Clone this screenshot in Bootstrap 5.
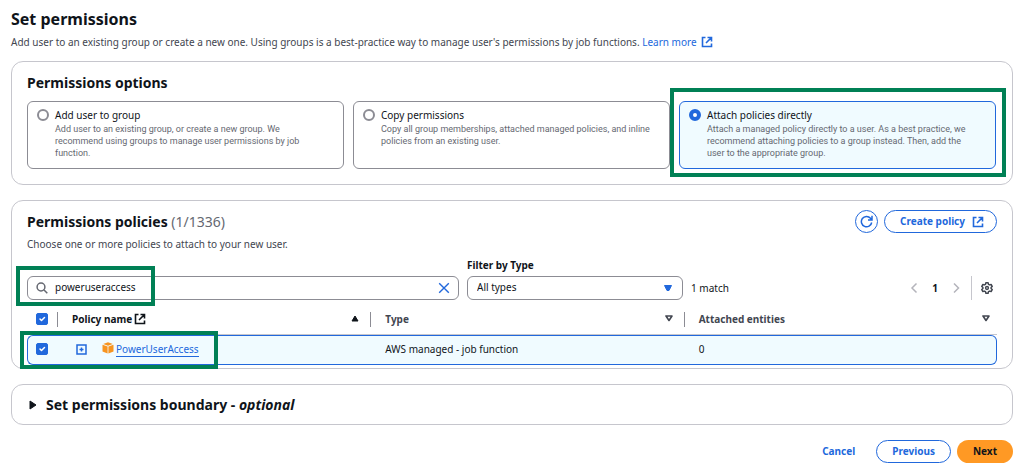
<!DOCTYPE html>
<html lang="en">
<head>
<meta charset="utf-8">
<meta name="viewport" content="width=device-width, initial-scale=1">
<title>Set permissions</title>
<link href="https://cdn.jsdelivr.net/npm/bootstrap@5.3.0/dist/css/bootstrap.min.css" rel="stylesheet">
<style>
  :root { --blue: #2168dc; --ink: #0f141a; --soft: #424650; --muted: #656871; --edge: #c6c6cd; --field: #8c8c94; --mark: #008055; }
  body { font-family: "Noto Sans", "Open Sans", sans-serif; font-size: 10px; line-height: 16px; color: var(--ink); background: #fff; }
  a { color: var(--blue); text-decoration: none; }
  svg { display: block; flex: none; }
  .page { padding: 8px 13px 7px 11px; }
  h1 { font-size: 16px; line-height: 22px; font-weight: 700; margin: 0; }
  h2 { font-size: 14px; line-height: 18px; font-weight: 700; margin: 0; }
  .intro { color: var(--soft); }
  .panel { border: 1px solid var(--edge); border-radius: 12px; padding: 0 15px; }

  .options { margin-top: 11px; padding: 12px 16px 15px 15px; }
  .options h2 { margin-bottom: 9px; }
  .tiles { display: grid; grid-template-columns: repeat(3, 1fr); gap: 9px; }
  .tile { position: relative; border: 1px solid var(--field); border-radius: 6px; padding: 5px 16px 8px 9px; min-height: 68px; cursor: pointer; gap: 6px; }
  .tile.chosen { border-color: var(--blue); background: #f0fbff; }
  .tile small { display: block; font-family: Roboto, sans-serif; font-size: 9px; line-height: 12px; color: var(--muted); }
  .tile .form-check-input { width: 12px; height: 12px; margin: 2px 0 0; border: 2px solid var(--field); flex: none; background-image: none; }
  .tile .form-check-input:checked { border: 4px solid var(--blue); background: #fff; }

  .callout { position: absolute; border: 4px solid var(--mark); pointer-events: none; z-index: 3; }
  .callout-tile { inset: -14px -11px -9px -10px; }
  .callout-search { left: -11px; width: 139px; top: -10px; bottom: -6px; }
  .callout-row { left: -7px; width: 198px; bottom: -4px; height: 38px; }

  .btn { --bs-btn-font-size: 10px; --bs-btn-font-weight: 700; --bs-btn-line-height: 15px; --bs-btn-padding-y: 3px; --bs-btn-padding-x: 15px; --bs-btn-border-radius: 12px; }
  .btn-line { --bs-btn-color: var(--blue); --bs-btn-border-color: var(--blue); --bs-btn-hover-color: var(--blue); --bs-btn-hover-bg: #f0fbff; --bs-btn-hover-border-color: var(--blue); }
  .btn-round { width: 23px; height: 23px; padding: 0; }
  .btn-next { --bs-btn-bg: #ff9924; --bs-btn-color: var(--ink); --bs-btn-hover-bg: #fa8900; --bs-btn-hover-color: var(--ink); }
  .btn-create { padding-right: 12px; gap: 7px; }
  .btn-cancel { color: var(--blue); }

  .listing { margin-top: 15px; padding-top: 9px; padding-bottom: 3px; }
  .count { font-weight: 400; color: var(--muted); }
  .buttons { gap: 6px; }
  .hint { margin-top: 3px; }
  .toolbar { margin-top: 5px; }
  .finder { flex: 2 1 0; }
  .kind { flex: 1 1 0; }
  .kind-label { margin-bottom: 3px; }
  .pager { flex: 0 0 306px; height: 24px; }
  .field { height: 24px; font-size: 10px; line-height: 16px; padding: 2px 9px 4px; border: 1px solid var(--field); border-radius: 6px; color: var(--ink); background-image: none; }
  .finder .field { padding-left: 27px; }
  .icon-over { position: absolute; top: 6px; pointer-events: none; }
  .search { left: 9px; }
  .arrow { right: 9px; }
  .bare { border: 0; background: none; padding: 0; color: inherit; }
  .clear { position: absolute; right: 9px; top: 6px; }
  .page-no { margin: 0 14px; }
  .split { width: 1px; background: var(--edge); align-self: stretch; margin: 0 9px 0 11px; }
  .gear { margin-right: 4px; }

  .policies { width: 100%; table-layout: fixed; border-collapse: separate; border-spacing: 0; }
  .policies th { position: relative; height: 35px; padding: 3px 11px 0 15px; color: var(--soft); border-bottom: 1px solid var(--edge); font-weight: 700; }
  .policies th + th::before { content: ""; position: absolute; left: 0; top: 12px; height: 15px; width: 1px; background: var(--field); }
  .policies td { height: 30px; padding: 0 15px 2px; background: #f0fbff; border: solid var(--blue); border-width: 1px 0; }
  .policies td:first-child { border-left-width: 1px; border-radius: 6px 0 0 6px; padding: 0 0 2px 8px; }
  .policies td:last-child { border-right-width: 1px; border-radius: 0 6px 6px 0; }
  .policies th:first-child { padding: 3px 0 0 9px; }
  .policies th:last-child { padding-right: 7px; }
  .policies th.picked { color: var(--ink); }
  .policies .form-check-input { display: block; width: 12px; height: 12px; margin: 0; border-radius: 2px; }
  .policies .form-check-input:checked { background-color: var(--blue); border-color: var(--blue); }
  .pick { width: 30px; }
  .name-icon { margin-left: 2px; }
  .expand { margin-left: 4px; }
  .box { margin: 0 2px 2px 15px; }
  .policy-link { border-bottom: 1px solid var(--blue); line-height: 14px; }

  .boundary { margin-top: 15px; padding-top: 11px; padding-bottom: 10px; }
  .boundary .bare { gap: 9px; margin-left: 2px; }
  .actions { margin-top: 15px; gap: 6px; }
</style>
</head>
<body>
<svg width="0" height="0" class="position-absolute" aria-hidden="true">
  <symbol id="external" viewBox="0 0 12 12"><path d="M4.500 1.500H1.500V10.500H10.500V7.500M6.500 1.500H10.500V5.500M10.500 1.500L5 7" fill="none" stroke="currentColor" stroke-width="1.600"/></symbol>
  <symbol id="sort" viewBox="0 0 8 7"><path d="M1 1h6L4 5.500z" fill="none" stroke="currentColor" stroke-width="1.600" stroke-linejoin="round"/></symbol>
</svg>
<main class="page">
  <h1>Set permissions</h1>
  <p class="intro d-flex align-items-center mb-0 mt-1">
    <span>Add user to an existing group or create a new one. Using groups is a best-practice way to manage user's permissions by job functions. <a href="#">Learn more</a></span>
    <a href="#" class="ms-1" aria-label="Opens in a new tab"><svg width="12" height="12"><use href="#external"/></svg></a>
  </p>

  <section class="panel options">
    <h2>Permissions options</h2>
    <div class="tiles">
      <label class="tile d-flex">
        <input class="form-check-input" type="radio" name="mode">
        <span><span>Add user to group</span><small>Add user to an existing group, or create a new group. We recommend using groups to manage user permissions by job function.</small></span>
      </label>
      <label class="tile d-flex">
        <input class="form-check-input" type="radio" name="mode">
        <span><span>Copy permissions</span><small>Copy all group memberships, attached managed policies, and inline policies from an existing user.</small></span>
      </label>
      <label class="tile chosen d-flex">
        <input class="form-check-input" type="radio" name="mode" checked>
        <span><span>Attach policies directly</span><small>Attach a managed policy directly to a user. As a best practice, we recommend attaching policies to a group instead. Then, add the user to the appropriate group.</small></span>
        <span class="callout callout-tile"></span>
      </label>
    </div>
  </section>

  <section class="panel listing">
    <div class="d-flex justify-content-between align-items-center">
      <h2>Permissions policies <span class="count">(1/1336)</span></h2>
      <div class="d-flex buttons">
        <button type="button" class="btn btn-line btn-round d-flex align-items-center justify-content-center" aria-label="Refresh">
          <svg width="13" height="13" viewBox="0 0 13 13" fill="none" stroke="currentColor" stroke-width="1.500"><path d="M11.700 7.500A5.200 5.200 0 1 1 10.500 3.200L12 5M12 .8V5H8"/></svg>
        </button>
        <button type="button" class="btn btn-line btn-create d-flex align-items-center">Create policy<svg width="12" height="12"><use href="#external"/></svg></button>
      </div>
    </div>
    <p class="intro hint mb-0">Choose one or more policies to attach to your new user.</p>
    <div class="d-flex align-items-end gap-2 toolbar">
      <div class="finder position-relative">
        <input type="text" class="form-control field" value="poweruseraccess" aria-label="Find policies">
        <svg class="icon-over search" width="12" height="12" viewBox="0 0 12 12" fill="none" stroke="#656871" stroke-width="1.500"><circle cx="5" cy="5" r="3.900"/><path d="M8 8l3.300 3.300"/></svg>
        <button type="button" class="bare clear" aria-label="Clear"><svg width="12" height="12" viewBox="0 0 12 12" stroke="#2168dc" stroke-width="1.400"><path d="M1.200 1.200l9.600 9.600M10.800 1.200l-9.600 9.600"/></svg></button>
        <span class="callout callout-search"></span>
      </div>
      <div class="kind">
        <label for="kind" class="d-block fw-bold kind-label">Filter by Type</label>
        <div class="position-relative">
          <select id="kind" class="form-select field"><option>All types</option></select>
          <svg class="icon-over arrow" width="12" height="12" viewBox="0 0 12 12"><path d="M2.500 3.500h7L7 8.500H5z" fill="#2168dc" stroke="#2168dc" stroke-linejoin="round"/></svg>
        </div>
      </div>
      <div class="pager d-flex align-items-center">
        <span class="me-auto">1 match</span>
        <button type="button" class="bare" aria-label="Previous page"><svg width="8" height="12" viewBox="0 0 8 12" fill="none" stroke="#b4b4bb" stroke-width="1.500"><path d="M6.500 1.500L2 6l4.500 4.500"/></svg></button>
        <span class="fw-bold page-no">1</span>
        <button type="button" class="bare" aria-label="Next page"><svg width="8" height="12" viewBox="0 0 8 12" fill="none" stroke="#b4b4bb" stroke-width="1.500"><path d="M2 1.500L6.500 6 2 10.500"/></svg></button>
        <span class="split"></span>
        <button type="button" class="bare gear" aria-label="Preferences"><svg width="12" height="12" viewBox="0 0 12 12" fill="none" stroke="#424650" stroke-width="1.500" stroke-linejoin="round"><path d="M4.900.8h2.200l.4 1.500 1.100.6 1.500-.4 1.100 1.900L10.100 5.500v1l1.100 1.100-1.100 1.900-1.500-.4-1.100.6-.4 1.500H4.900l-.4-1.500-1.100-.6-1.500.4L.8 7.600 1.900 6.500v-1L.8 4.400l1.100-1.900 1.500.4 1.100-.6z"/><circle cx="6" cy="6" r="1.400"/></svg></button>
      </div>
    </div>
    <div class="position-relative">
      <table class="policies">
        <colgroup><col class="pick"><col><col><col></colgroup>
        <thead>
          <tr>
            <th><input class="form-check-input" type="checkbox" checked aria-label="Select all"></th>
            <th class="picked"><div class="d-flex align-items-center">Policy name<svg class="name-icon" width="12" height="12"><use href="#external"/></svg><svg class="ms-auto" width="8" height="7" viewBox="0 0 8 7"><path d="M4 1l3 5H1z" fill="#0f141a" stroke="#0f141a" stroke-linejoin="round"/></svg></div></th>
            <th><div class="d-flex align-items-center justify-content-between">Type<svg width="8" height="7"><use href="#sort"/></svg></div></th>
            <th><div class="d-flex align-items-center justify-content-between">Attached entities<svg width="8" height="7"><use href="#sort"/></svg></div></th>
          </tr>
        </thead>
        <tbody>
          <tr>
            <td><input class="form-check-input" type="checkbox" checked aria-label="Select PowerUserAccess"></td>
            <td><div class="d-flex align-items-center">
              <button type="button" class="bare expand" aria-label="Expand"><svg width="11" height="11" viewBox="0 0 11 11" fill="none" stroke="#2168dc" stroke-width="1.500"><path d="M1 1h9v9H1zM5.500 3.500v4M3.500 5.500h4"/></svg></button>
              <svg class="box" width="12" height="12" viewBox="0 0 12 12" fill="#f79420"><path d="M.5 2.800l5.100 1.700v7L.5 9.500zM11.500 2.800L6.400 4.500v7l5.100-2zM6 .3l4.800 1.700L6 3.700 1.200 2z"/></svg>
              <a href="#" class="policy-link">PowerUserAccess</a>
            </div></td>
            <td>AWS managed - job function</td>
            <td>0</td>
          </tr>
        </tbody>
      </table>
      <span class="callout callout-row"></span>
    </div>
  </section>

  <section class="panel boundary">
    <button type="button" class="bare d-flex align-items-center">
      <svg width="8" height="10" viewBox="0 0 8 10"><path d="M1 1L7 5 1 9z" fill="#0f141a" stroke="#0f141a" stroke-linejoin="round"/></svg>
      <h2>Set permissions boundary - <em>optional</em></h2>
    </button>
  </section>

  <div class="d-flex justify-content-end actions">
    <button type="button" class="btn btn-cancel border-0">Cancel</button>
    <button type="button" class="btn btn-line">Previous</button>
    <button type="button" class="btn btn-next">Next</button>
  </div>
</main>
<script src="https://cdn.jsdelivr.net/npm/bootstrap@5.3.0/dist/js/bootstrap.bundle.min.js"></script>
</body>
</html>
